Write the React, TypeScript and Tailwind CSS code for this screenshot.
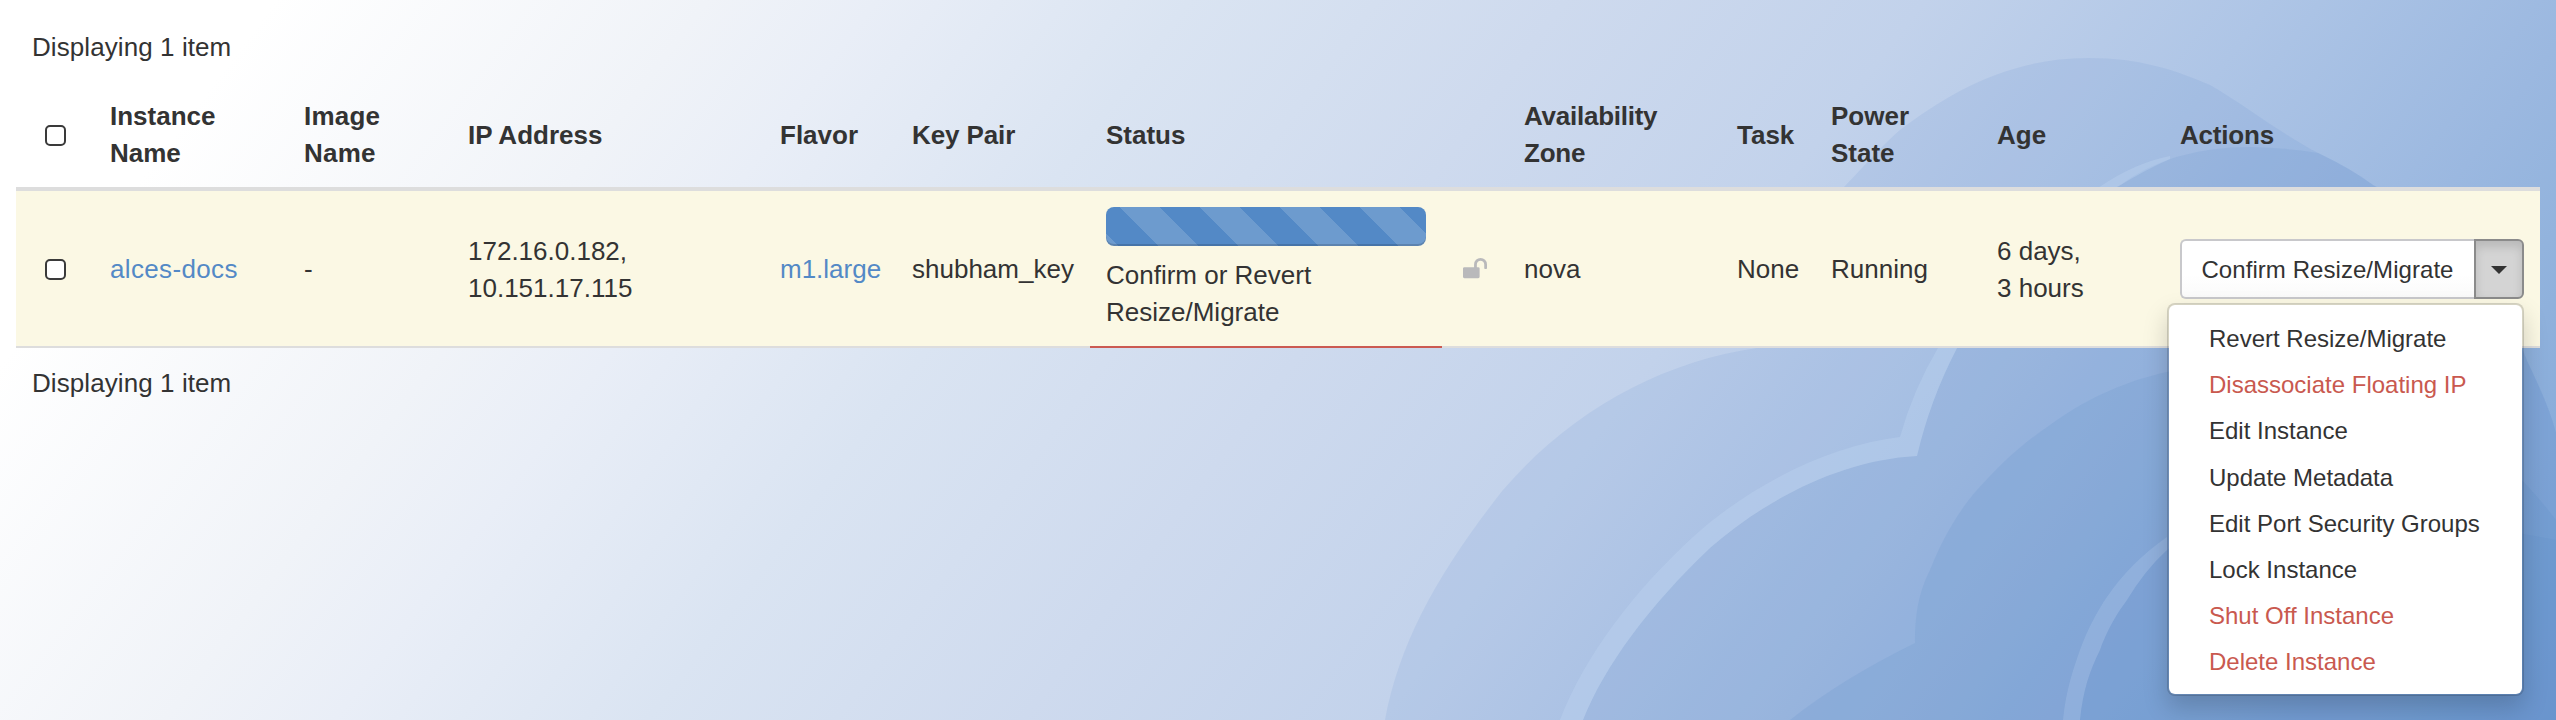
import type { ReactNode } from "react";

const columns: { label: ReactNode; width: string }[] = [
  { label: <Checkbox label="Select all" />, width: "w-[78px]" },
  { label: <>Instance<br />Name</>, width: "w-[194px]" },
  { label: <span className="inline-block tracking-[0.2px]">Image<br />Name</span>, width: "w-[164px]" },
  { label: "IP Address", width: "w-[312px]" },
  { label: "Flavor", width: "w-[132px]" },
  { label: <span className="tracking-[-0.1px]">Key Pair</span>, width: "w-[194px]" },
  { label: "Status", width: "w-[352px]" },
  { label: "", width: "w-[66px]" },
  { label: <span className="inline-block tracking-[-0.25px]">Availability<br />Zone</span>, width: "w-[213px]" },
  { label: "Task", width: "w-[94px]" },
  { label: <>Power<br />State</>, width: "w-[166px]" },
  { label: "Age", width: "w-[183px]" },
  { label: <span className="tracking-[-0.2px]">Actions</span>, width: "w-[376px]" },
];

const menuItems = [
  { label: "Revert Resize/Migrate", danger: false },
  { label: "Disassociate Floating IP", danger: true },
  { label: "Edit Instance", danger: false },
  { label: "Update Metadata", danger: false },
  { label: "Edit Port Security Groups", danger: false },
  { label: "Lock Instance", danger: false },
  { label: "Shut Off Instance", danger: true },
  { label: "Delete Instance", danger: true },
];

function Checkbox({ label }: { label: string }) {
  return (
    <input
      type="checkbox"
      aria-label={label}
      className="ml-[12.5px] block size-[21px] appearance-none rounded-[5px] border-2 border-[#3a3a3a] bg-white"
    />
  );
}

function Clouds() {
  return (
    <svg className="absolute inset-0 -z-10 h-[720px] w-[2556px]" viewBox="0 0 2556 720" aria-hidden="true">
      <path
        fill="#4f83c5"
        fillOpacity="0.11"
        d="M1385 720C1400 640 1440 570 1503 490C1570 412 1660 362 1757 348C1775 285 1805 225 1845 186C1870 160 1885 143 1900 130C1950 92 2010 58 2088 58C2140 58 2175 70 2210 85C2240 102 2280 133 2318 153Q2350 168 2373 185C2450 225 2500 290 2528 363C2540 388 2550 410 2556 433V720Z"
      />
      <path
        fill="#4f83c5"
        fillOpacity="0.12"
        d="M1583 720C1605 665 1650 605 1710 548C1765 500 1840 460 1917 456Q1930 400 1957 348C1985 280 2040 225 2119 186Q2170 147 2250 147Q2290 148 2318 153Q2350 168 2373 185C2450 225 2500 290 2528 363C2540 388 2550 410 2556 433V720Z"
      />
      <path
        fill="#bfd6f2"
        fillOpacity="0.36"
        d="M1560 720C1585 655 1635 590 1693 537C1750 485 1830 445 1900 437Q1913 390 1938 348C1970 280 2030 225 2101 186Q2135 163 2170 156V159Q2145 170 2119 186C2040 225 1985 280 1957 348Q1930 400 1917 456C1840 460 1765 500 1710 548C1650 605 1605 665 1583 720Z"
      />
      <path
        fill="#4f83c5"
        fillOpacity="0.13"
        d="M1790 720Q1840 680 1915 643C1915 610 1920 590 1930 570C1940 545 1955 515 1977 490C2000 465 2020 445 2050 425C2090 396 2130 380 2167 372C2300 340 2450 380 2556 520V720Z"
      />
      <path
        fill="#4f83c5"
        fillOpacity="0.1"
        d="M2080 720C2083 690 2090 670 2100 650C2110 623 2120 610 2127 600Q2145 570 2167 550C2260 480 2450 520 2556 540V720Z"
      />
      <path
        fill="#bfd6f2"
        fillOpacity="0.22"
        d="M2063 720C2066 690 2073 670 2080 650C2088 628 2098 610 2107 597Q2130 563 2167 537V550Q2145 570 2127 600C2120 610 2110 623 2100 650C2090 670 2083 690 2080 720Z"
      />
    </svg>
  );
}

function UnlockIcon() {
  return (
    <svg className="mx-auto h-[26px] w-[24px] fill-[#b9b9bb]" viewBox="0 0 1664 1792" aria-hidden="true">
      <path d="M1664 576v256q0 26-19 45t-45 19h-64q-26 0-45-19t-19-45v-256q0-106-75-181t-181-75-181 75-75 181v192h96q40 0 68 28t28 68v576q0 40-28 68t-68 28h-960q-40 0-68-28t-28-68v-576q0-40 28-68t68-28h672v-192q0-185 131.500-316.500t316.500-131.500 316.500 131.500 131.500 316.500z" />
    </svg>
  );
}

function ActionMenu() {
  return (
    <div className="relative -top-px flex h-[60px] w-[344px] text-[24px]">
      <button className="flex-1 rounded-l-[6px] border-2 border-r-0 border-[#c8c8cb] bg-linear-to-b from-white from-60% to-[#fafafa] pt-0.5 pr-px text-center tracking-[0.06px] whitespace-nowrap">
        Confirm Resize/Migrate
      </button>
      <button
        aria-label="More actions"
        className="flex w-[50px] items-center justify-center rounded-r-[6px] border-2 border-[#8b8b8b] bg-[#d4d4d4] shadow-[inset_0_6px_10px_rgba(0,0,0,0.125)]"
      >
        <span className="mt-0.5 border-x-[8px] border-t-[8px] border-x-transparent border-t-[#333]" />
      </button>
      <ul className="absolute top-full right-0 mt-1 h-[393px] w-[357px] rounded-[8px] border-2 border-black/15 bg-white bg-clip-padding pt-[11px] pb-[7px] shadow-[0_12px_24px_rgba(0,0,0,0.175)]">
        {menuItems.map((item) => (
          <li
            key={item.label}
            className={
              item.danger
                ? "flex h-[46.2px] items-center pl-10 whitespace-nowrap text-[#c9594f]"
                : "flex h-[46.2px] items-center pl-10 whitespace-nowrap"
            }
          >
            {item.label}
          </li>
        ))}
      </ul>
    </div>
  );
}

const cell = "border-b-2 border-[#ddd] px-4 pt-[17px] pb-[15px]";

export default function App() {
  return (
    <div className="relative isolate h-[720px] w-[2556px] overflow-hidden bg-[linear-gradient(127deg,#fff_0px,#fff_220px,#f0f3f8_565px,#e9eef7_700px,#dae4f2_950px,#cedaee_1250px,#c2d2eb_1537px,#aec5e6_1815px,#9bb8e0_2068px,#92b3dd_2180px,#7ba3d6_2491px)] px-4 pt-[29px] font-['Liberation_Sans',Arial,sans-serif] text-[26px] leading-[37px] text-[#333]">
      <Clouds />
      <p className="mb-[15px] pl-4 tracking-[0.08px]">Displaying 1 item</p>
      <table className="w-[2524px] table-fixed border-separate border-spacing-0 text-left">
        <thead>
          <tr>
            {columns.map((column, index) => (
              <th key={index} className={`${column.width} h-[110px] border-b-4 border-[#ddd] px-4 pt-[17px] pb-[15px] align-middle font-bold`}>
                {column.label}
              </th>
            ))}
          </tr>
        </thead>
        <tbody>
          <tr className="bg-[#fbf8e4]">
            <td className={cell}><Checkbox label="Select alces-docs" /></td>
            <td className={cell}><a className="tracking-[0.35px] text-[#5389c6]">alces-docs</a></td>
            <td className={cell}>-</td>
            <td className={cell}>172.16.0.182,<br />10.151.17.115</td>
            <td className={cell}><a className="text-[#5389c6]">m1.large</a></td>
            <td className={cell}>shubham_key</td>
            <td className="border-b-2 border-[#cb5a52] px-4 pt-4 pb-[15px]">
              <div className="mb-[11px] h-[39px] rounded-[8px] bg-[#5389c6] bg-[linear-gradient(45deg,rgba(255,255,255,0.15)_25%,transparent_25%,transparent_50%,rgba(255,255,255,0.15)_50%,rgba(255,255,255,0.15)_75%,transparent_75%)] bg-size-[80px_80px] bg-position-[14px_0px] shadow-[inset_0_-2px_0_rgba(0,0,0,0.15)]" />
              Confirm or Revert<br />Resize/Migrate
            </td>
            <td className="border-b-2 border-[#ddd]"><UnlockIcon /></td>
            <td className={cell}>nova</td>
            <td className={cell}>None</td>
            <td className={cell}>Running</td>
            <td className={cell}>6 days,<br />3 hours</td>
            <td className={cell}><ActionMenu /></td>
          </tr>
        </tbody>
      </table>
      <p className="mt-[17px] pl-4 tracking-[0.08px]">Displaying 1 item</p>
    </div>
  );
}
